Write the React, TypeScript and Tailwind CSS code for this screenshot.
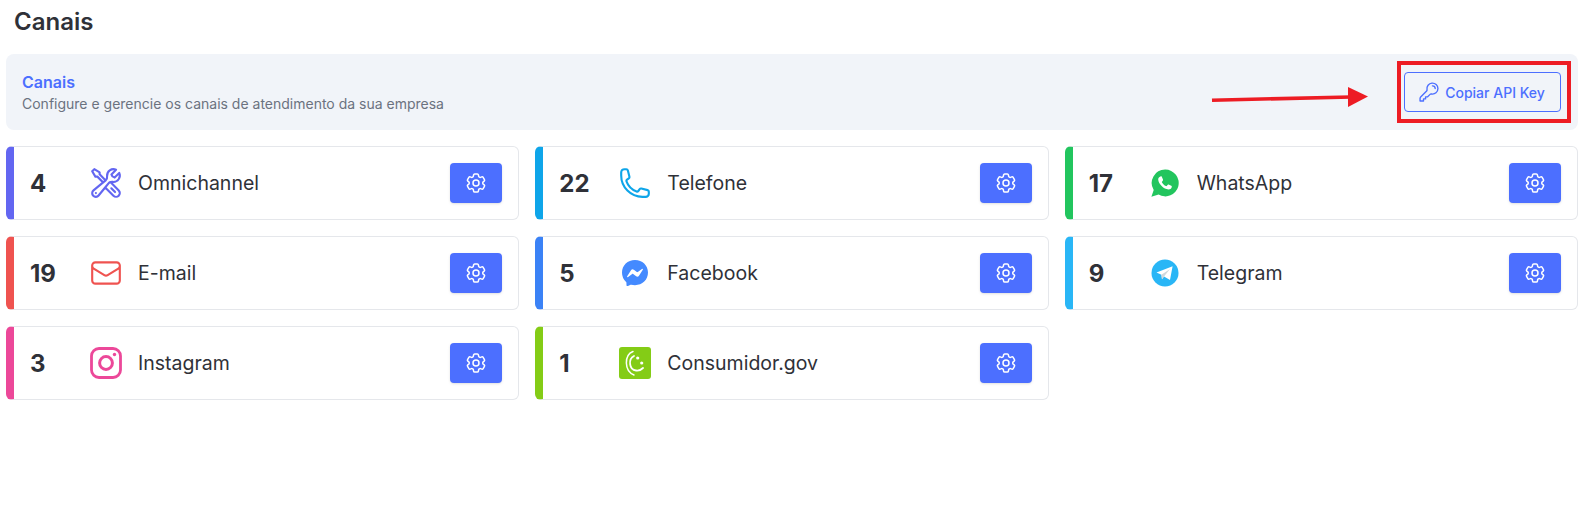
import React from "react";
import { HiOutlineWrenchScrewdriver, HiOutlinePhone, HiOutlineEnvelope, HiOutlineCog6Tooth, HiOutlineKey } from "react-icons/hi2";
import { SiMessenger } from "react-icons/si";

const WhatsApp = () => (
  <svg viewBox="0 0 28 28" className="w-[28px] h-[28px]">
    <path d="M14.2 0.6A13.4 13.4 0 0 0 2.7 21L0.4 27.8 7.6 25.6A13.4 13.4 0 1 0 14.2 0.6Z" fill="#22c55e" />
    <path d="M9.9 7.3c.4 0 .8 0 1 .6l1.1 2.7c.1.3.1.6-.1.9l-.9 1.2c-.2.2-.2.5 0 .8.9 1.6 2.2 2.8 3.9 3.6.3.1.6.1.8-.1l1.1-1.3c.2-.3.5-.3.8-.2l2.7 1.3c.3.2.5.3.5.6 0 1.7-1.4 3.1-3.4 3.1-4.6-.3-9.9-5.2-10.2-9.9 0-1.4.8-2.4 1.7-2.8.4-.3.7-.5 1-.5Z" fill="#fff" />
  </svg>
);

const Telegram = () => (
  <svg viewBox="0 0 28 28" className="w-[28px] h-[28px]">
    <circle cx="14" cy="14" r="13.5" fill="#29b6f6" />
    <path d="M5.5 13.6 21.6 7.2 19 21 13 17.6 11 20.2 10.4 15.8Z" fill="#fff" />
    <path d="M10.4 15.8 19 10 13 17.6 11 20.2Z" fill="#cfd8dc" />
  </svg>
);

const Instagram = () => (
  <svg viewBox="0 0 32 32" className="w-[32px] h-[32px]" fill="none" stroke="#ec4899">
    <rect x="1.5" y="1.5" width="29" height="29" rx="7.5" strokeWidth="2.8" />
    <circle cx="16" cy="16" r="6.4" strokeWidth="3" />
    <circle cx="24.5" cy="7.5" r="1.7" fill="#ec4899" stroke="none" />
  </svg>
);

const Consumidor = () => (
  <svg viewBox="0 0 32 32" className="w-[32px] h-[32px]">
    <rect width="32" height="32" rx="3" fill="#84cc16" />
    <g fill="none" stroke="#fff" strokeLinecap="round">
      <path d="M14 4.5C5 8 5 24 15 28" strokeWidth="1.5" />
      <path d="M15 9C9 12 10 23 17 23.5 20 24 23 22 24 21" strokeWidth="1.8" />
    </g>
    <circle cx="18.7" cy="11" r="1.6" fill="#fff" />
    <circle cx="22.7" cy="16" r="1.6" fill="#fff" />
  </svg>
);

type Ch = { n: number; label: string; bar: string; icon: React.ReactNode };

const channels: Ch[] = [
  { n: 4, label: "Omnichannel", bar: "border-l-[#6366f1]", icon: <HiOutlineWrenchScrewdriver className="shrink-0 w-[34px] h-[34px] text-[#6366f1]" /> },
  { n: 22, label: "Telefone", bar: "border-l-[#0ea5e9]", icon: <HiOutlinePhone className="shrink-0 w-[34px] h-[34px] text-[#0ea5e9]" /> },
  { n: 17, label: "WhatsApp", bar: "border-l-[#22c55e]", icon: <WhatsApp /> },
  { n: 19, label: "E-mail", bar: "border-l-[#ef5350]", icon: <HiOutlineEnvelope className="shrink-0 w-[34px] h-[34px] text-[#ef5350]" /> },
  { n: 5, label: "Facebook", bar: "border-l-[#3b82f6]", icon: <SiMessenger className="shrink-0 w-[26px] h-[26px] text-[#448aff]" /> },
  { n: 9, label: "Telegram", bar: "border-l-[#29b6f6]", icon: <Telegram /> },
  { n: 3, label: "Instagram", bar: "border-l-[#ec4899]", icon: <Instagram /> },
  { n: 1, label: "Consumidor.gov", bar: "border-l-[#84cc16]", icon: <Consumidor /> },
];

export default function App() {
  return (
    <div className="min-h-[521px] bg-white font-['Inter',sans-serif] text-[#2f3138] pl-[6px] pr-[7px]">
      <h1 className="pl-[8px] pt-[8px] text-[24px] leading-[28px] font-semibold text-[#2f3138]">Canais</h1>

      <div className="relative mt-[18px] h-[76px] rounded-lg bg-[#f1f4f9] pl-[16px] pr-[17px] flex items-center justify-between">
        <div className="pt-[2px]">
          <div className="text-[16px] leading-[19px] font-semibold text-[#4c6fff]">Canais</div>
          <div className="mt-[2px] text-[14px] leading-[20px] text-[#6b7280]">
            Configure e gerencie os canais de atendimento da sua empresa
          </div>
        </div>
        <button className="flex items-center justify-center gap-[5px] w-[157px] h-[40px] rounded border border-[#4c6fff] pr-[2px] text-[14px] font-medium text-[#4c6fff]">
          <HiOutlineKey className="w-[22px] h-[22px]" />
          Copiar API Key
        </button>

        <div className="absolute left-[1391px] top-[7px] w-[174px] h-[62px] border-[4px] border-[#ed1c24]" />
        <svg className="absolute left-[1199px] top-[28px]" width="164" height="26" viewBox="0 0 164 26">
          <path d="M7 18.2 146 15" stroke="#ed1c24" strokeWidth="3.6" />
          <path d="M143 5 163 14.5 143 25Z" fill="#ed1c24" />
        </svg>
      </div>

      <div className="mt-[16px] grid grid-cols-3 gap-[16px]">
        {channels.map((c) => (
          <div key={c.label} className={`flex h-[74px] items-center rounded-md border border-[#e5e7eb] border-l-[8px] bg-white pl-[16px] pr-[16px] ${c.bar}`}>
            <div className="w-[60px] pt-[1px] text-[24px] font-bold leading-none text-[#2f3138]">{c.n}</div>
            <div className="flex w-[32px] shrink-0 items-center justify-center">{c.icon}</div>
            <div className="ml-[16px] flex-1 pt-[2px] text-[19.5px] text-[#2f3138]">{c.label}</div>
            <button className="flex h-[40px] w-[52px] items-center justify-center rounded bg-[#4c6fff] shadow-sm">
              <HiOutlineCog6Tooth className="h-[24px] w-[24px] text-white" />
            </button>
          </div>
        ))}
      </div>
    </div>
  );
}
